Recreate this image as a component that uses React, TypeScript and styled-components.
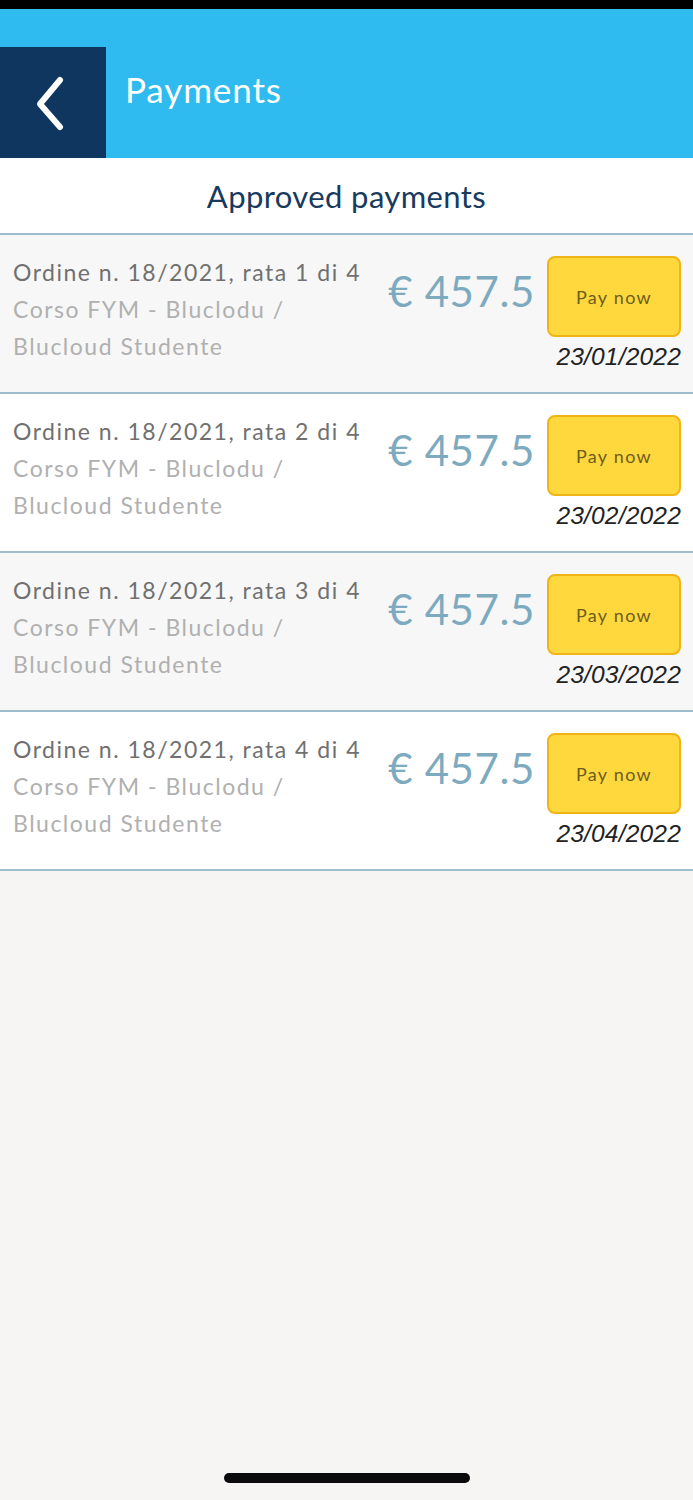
import styled, { createGlobalStyle } from 'styled-components';

const PAYMENTS = [
  { rate: 1, date: '23/01/2022' },
  { rate: 2, date: '23/02/2022' },
  { rate: 3, date: '23/03/2022' },
  { rate: 4, date: '23/04/2022' },
];

const GlobalStyle = createGlobalStyle`
  html, body {
    margin: 0;
    padding: 0;
    background: #f6f5f3;
    font-family: Lato, "Noto Sans", sans-serif;
  }
`;

const Screen = styled.div`
  position: relative;
  width: 693px;
  min-height: 1500px;
  background: #f6f5f3;
  display: flex;
  flex-direction: column;
`;

const StatusBar = styled.div`
  height: 9px;
  background: #000;
`;

const HeaderBar = styled.header`
  background: #2fbbef;
  height: 149px;
  display: flex;
  align-items: flex-end;
`;

const BackButton = styled.button`
  width: 106px;
  height: 111px;
  border: none;
  padding: 0;
  background: #0e365e;
  display: flex;
  align-items: center;
  justify-content: center;
  cursor: pointer;
`;

const Title = styled.h1`
  margin: 59px 0 0 19px;
  align-self: flex-start;
  font-size: 35px;
  line-height: 42px;
  letter-spacing: 0.9px;
  font-weight: 400;
  color: #fff;
`;

const SubHeader = styled.div`
  height: 75px;
  background: #fff;
  display: flex;
  align-items: center;
  justify-content: center;
  border-bottom: 2px solid #9dbccc;
  font-size: 31px;
  letter-spacing: 0.4px;
  color: #173a5e;
`;

const Row = styled.div<{ $even: boolean }>`
  height: 159px;
  background: ${({ $even }) => ($even ? '#fff' : '#f7f7f7')};
  border-bottom: 2px solid #9dbccc;
  display: flex;
  padding: 19px 12px 0 13px;
  box-sizing: border-box;
`;

const Info = styled.div`
  flex: 1;
  font-size: 23px;
  line-height: 37px;
  letter-spacing: 1.5px;
  color: #b0b0b0;
  white-space: nowrap;
`;

const OrderLine = styled.div`
  color: #707070;
`;

const Amount = styled.div`
  font-size: 42px;
  letter-spacing: 0.6px;
  color: #7daabf;
  padding-top: 12px;
  margin-right: 12px;
  white-space: nowrap;
`;

const Side = styled.div`
  display: flex;
  flex-direction: column;
  align-items: flex-end;
  padding-top: 2px;
`;

const PayButton = styled.button`
  width: 134px;
  height: 81px;
  background: #fed83d;
  border: 2px solid #f0b416;
  border-radius: 8px;
  font-family: Lato, "Noto Sans", sans-serif;
  font-size: 18px;
  letter-spacing: 1.3px;
  color: #6e5d1e;
  cursor: pointer;
`;

const DueDate = styled.div`
  margin-top: 6px;
  font-family: "Liberation Sans", Arial, sans-serif;
  font-style: italic;
  font-size: 24.5px;
  letter-spacing: 0.2px;
  color: #222;
`;

const HomeIndicator = styled.div`
  position: absolute;
  left: 224px;
  top: 1473px;
  width: 246px;
  height: 10px;
  border-radius: 5px;
  background: #0a0a0c;
`;

function Chevron() {
  return (
    <svg width="40" height="60" viewBox="0 0 40 60">
      <polyline
        points="27,7 7,31 27,54"
        fill="none"
        stroke="#fff"
        strokeWidth="6"
        strokeLinecap="round"
        strokeLinejoin="round"
      />
    </svg>
  );
}

export default function App() {
  return (
    <Screen>
      <GlobalStyle />
      <StatusBar />
      <HeaderBar>
        <BackButton type="button" aria-label="Back">
          <Chevron />
        </BackButton>
        <Title>Payments</Title>
      </HeaderBar>
      <SubHeader>Approved payments</SubHeader>
      {PAYMENTS.map((p, i) => (
        <Row key={p.rate} $even={i % 2 === 1}>
          <Info>
            <OrderLine>Ordine n. 18/2021, rata {p.rate} di 4</OrderLine>
            <div>Corso FYM - Bluclodu /</div>
            <div>Blucloud Studente</div>
          </Info>
          <Amount>€ 457.5</Amount>
          <Side>
            <PayButton type="button">Pay now</PayButton>
            <DueDate>{p.date}</DueDate>
          </Side>
        </Row>
      ))}
      <HomeIndicator />
    </Screen>
  );
}
